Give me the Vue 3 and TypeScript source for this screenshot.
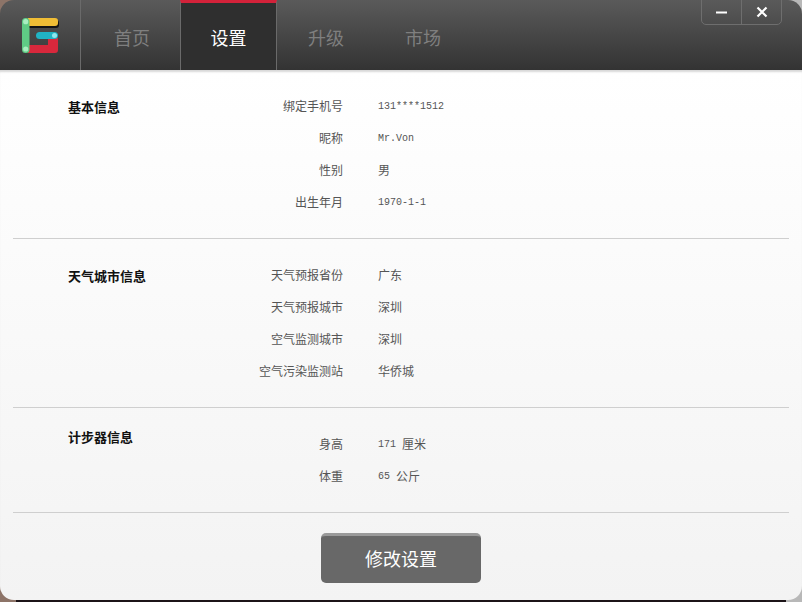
<script setup lang="ts">
interface Row { label: string; mono?: string; cjk?: string }
interface Section { title: string; rows: Row[]; kind: string }

const tabs = ['首页', '设置', '升级', '市场']
const sections: Section[] = [
  {
    title: '基本信息',
    kind: 'basic',
    rows: [
      { label: '绑定手机号', mono: '131****1512' },
      { label: '昵称', mono: 'Mr.Von' },
      { label: '性别', cjk: '男' },
      { label: '出生年月', mono: '1970-1-1' },
    ],
  },
  {
    title: '天气城市信息',
    kind: 'weather',
    rows: [
      { label: '天气预报省份', cjk: '广东' },
      { label: '天气预报城市', cjk: '深圳' },
      { label: '空气监测城市', cjk: '深圳' },
      { label: '空气污染监测站', cjk: '华侨城' },
    ],
  },
  {
    title: '计步器信息',
    kind: 'steps',
    rows: [
      { label: '身高', mono: '171 ', cjk: '厘米' },
      { label: '体重', mono: '65 ', cjk: '公斤' },
    ],
  },
]
</script>

<template>
  <div class="desktop">
    <div class="window">
      <header class="header">
        <div class="logo">
          <svg width="38" height="36" viewBox="0 0 38 36">
            <path d="M8 3H35a3 3 0 0 1 3 3v2a3 3 0 0 1-3 3H8z" fill="#141414" />
            <path d="M7 1H34a3 3 0 0 1 3 3v2a3 3 0 0 1-3 3H7z" fill="#f0bd35" />
            <path d="M7 28H27V21H37V33a3 3 0 0 1-3 3H7z" fill="#d8283c" />
            <rect x="15" y="15" width="22" height="7" rx="3.5" fill="#20b3c4" />
            <rect x="1" y="1" width="7.5" height="35" rx="3.5" fill="#5fcb85" />
            <circle cx="4.7" cy="4.7" r="2.6" fill="#a9eec0" />
            <circle cx="4.7" cy="32" r="2.6" fill="#a9eec0" />
            <circle cx="33.5" cy="18.5" r="2.5" fill="#8fe6ee" />
          </svg>
        </div>
        <nav class="tabs">
          <div
            v-for="(tab, i) in tabs"
            :key="tab"
            class="tab"
            :class="{ active: i === 1, divided: i < 2 }"
          >{{ tab }}</div>
        </nav>
        <div class="controls">
          <button class="ctl">
            <svg width="11" height="3" viewBox="0 0 11 3"><rect width="11" height="2" y="0.5" fill="#fff" /></svg>
          </button>
          <button class="ctl">
            <svg width="12" height="12" viewBox="0 0 12 12"><path d="M1.5 1.5l9 9M10.5 1.5l-9 9" stroke="#fff" stroke-width="2.2" /></svg>
          </button>
        </div>
      </header>
      <main class="content">
        <section v-for="s in sections" :key="s.title" class="section" :class="s.kind">
          <h2 class="title">{{ s.title }}</h2>
          <div class="rows">
            <div v-for="r in s.rows" :key="r.label" class="row">
              <span class="label">{{ r.label }}</span>
              <span class="value"><span v-if="r.mono" class="mono">{{ r.mono }}</span><span v-if="r.cjk" class="cjk">{{ r.cjk }}</span></span>
            </div>
          </div>
        </section>
        <div class="footer">
          <button class="save">修改设置</button>
        </div>
      </main>
    </div>
  </div>
</template>

<style>
html, body { margin: 0; padding: 0; overflow: hidden; }
</style>

<style scoped>
.desktop {
  width: 802px;
  height: 602px;
  background: linear-gradient(90deg, #8d7468 0, #8d7468 16px, #1c1418 16px, #1c1418 786px, #b8b8b8 786px);
  overflow: hidden;
}
.window {
  width: 802px;
  height: 600px;
  border-radius: 14px;
  overflow: hidden;
  display: flex;
  flex-direction: column;
  font-family: "Noto Sans CJK SC", sans-serif;
}
.header {
  height: 70px;
  flex: none;
  display: flex;
  position: relative;
  background: linear-gradient(#5a5a5a, #333333);
}
.logo {
  width: 80px;
  display: flex;
  align-items: center;
  justify-content: center;
}
.tabs { display: flex; }
.tab {
  width: 96px;
  display: flex;
  align-items: center;
  justify-content: center;
  font-size: 18px;
  color: #7f7f7f;
  padding-top: 3px;
  box-sizing: border-box;
}
.tab.divided { border-left: 1px solid #6a6a6a; }
.tab:first-child { width: 100px; padding-left: 3px; }
.tab:nth-child(3) { width: 98px; }
.tab.active {
  width: 97px;
  background: #2f2f2f;
  color: #fff;
  border-top: 3px solid #d3223a;
  border-right: 1px solid #6a6a6a;
  padding-top: 0;
}
.controls {
  position: absolute;
  top: -1px;
  right: 20px;
  display: flex;
  border: 1px solid #6e6e6e;
  border-radius: 0 0 5px 5px;
}
.ctl {
  width: 39px;
  height: 24px;
  padding: 0;
  border: 0;
  background: transparent;
  display: flex;
  align-items: center;
  justify-content: center;
}
.ctl + .ctl { width: 40px; border-left: 1px solid #6e6e6e; }
.content {
  flex: 1;
  min-height: 0;
  padding: 0 13px;
  background: linear-gradient(#ffffff, #f3f3f3);
  box-shadow: inset 0 3px 2px -1px #d8d8d8;
}
.section {
  display: flex;
  border-bottom: 1px solid #cfcfcf;
  box-sizing: border-box;
}
.section.basic { height: 169px; padding-top: 20px; }
.section.weather { height: 169px; padding-top: 20px; }
.section.steps { height: 105px; padding-top: 20px; }
.title {
  width: 190px;
  margin: 1px 0 0;
  padding-left: 55px;
  box-sizing: border-box;
  font-size: 13px;
  line-height: 32px;
  height: 32px;
  font-weight: 700;
  color: #111;
}
.steps .title { margin-top: -7px; }
.rows { display: flex; flex-direction: column; }
.row { display: flex; height: 32px; align-items: center; }
.label {
  width: 140px;
  text-align: right;
  font-size: 12px;
  color: #555;
  margin-bottom: 2px;
}
.value {
  margin-left: 35px;
  font-size: 12px;
  color: #555;
  display: flex;
  align-items: center;
  white-space: pre;
}
.mono {
  font-family: "Liberation Mono", monospace;
  font-size: 10px;
}
.cjk { margin-bottom: 2px; }
.footer {
  display: flex;
  justify-content: center;
  padding-top: 20px;
}
.save {
  width: 160px;
  height: 50px;
  border: 0;
  border-top: 3px solid #9a9a9a;
  border-radius: 5px;
  background: #686868;
  color: #fff;
  font-family: "Noto Sans CJK SC", sans-serif;
  font-size: 18px;
  padding: 0 0 3px;
}
</style>
